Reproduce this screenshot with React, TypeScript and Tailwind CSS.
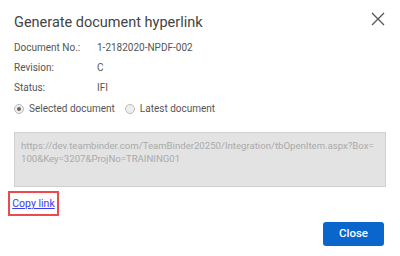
export default function App() {
  return (
    <div className="w-[400px] h-[256px] bg-white relative font-['Roboto',sans-serif] text-[#555]">
      <div className="px-[14px] pt-[10px]">
        <div className="flex items-start justify-between">
          <h1 className="text-[14.5px] text-[#444] leading-[20px] mt-[3px]">Generate document hyperlink</h1>
          <button type="button" className="mt-[2px] mr-[1px] text-[#555]" aria-label="Close dialog">
            <CloseIcon className="w-[14px] h-[14px]" />
          </button>
        </div>
        <div className="mt-[5px] text-[10px] leading-[20px]">
          <div className="flex">
            <span className="w-[83px]">Document No.:</span>
            <span>1-2182020-NPDF-002</span>
          </div>
          <div className="flex">
            <span className="w-[83px]">Revision:</span>
            <span>C</span>
          </div>
          <div className="flex">
            <span className="w-[83px]">Status:</span>
            <span>IFI</span>
          </div>
          <div className="flex items-center mt-[1px]">
            <span className="w-[10px] h-[10px] rounded-full border border-[#bbb] bg-[#eee] flex items-center justify-center">
              <span className="w-[4px] h-[4px] rounded-full bg-[#666]" />
            </span>
            <span className="ml-[5px]">Selected document</span>
            <span className="ml-[10px] w-[10px] h-[10px] rounded-full border border-[#bbb] bg-[#eee]" />
            <span className="ml-[5px]">Latest document</span>
          </div>
        </div>
        <div className="mt-[13px] h-[55px] bg-[#e3e3e3] border border-[#d0d0d0] px-[6px] pt-[6px] text-[9.6px] leading-[13px] text-[#aaa] whitespace-nowrap overflow-hidden">
          https://dev.teambinder.com/TeamBinder20250/Integration/tbOpenItem.aspx?Box=
          <br />
          100&amp;Key=3207&amp;ProjNo=TRAINING01
        </div>
      </div>
      <div className="ml-[8px] mt-[4px] w-[51px] h-[25px] border-2 border-[#ec4a4f] flex items-center justify-center">
        <a href="#" className="text-[10.5px] text-[#3a3af0] underline">Copy link</a>
      </div>
      <div className="flex justify-end pr-[16px] mt-[6px]">
        <button type="button" className="w-[61px] h-[24px] rounded-[3px] bg-[#0a66cc] text-white text-[11.5px] font-medium">
          Close
        </button>
      </div>
    </div>
  );
}

function CloseIcon({ className }: { className?: string }) {
  return (
    <svg className={className} viewBox="0 0 14 14" fill="none" stroke="currentColor" strokeWidth={1.3}>
      <path d="M1 1L13 13M13 1L1 13" />
    </svg>
  );
}
